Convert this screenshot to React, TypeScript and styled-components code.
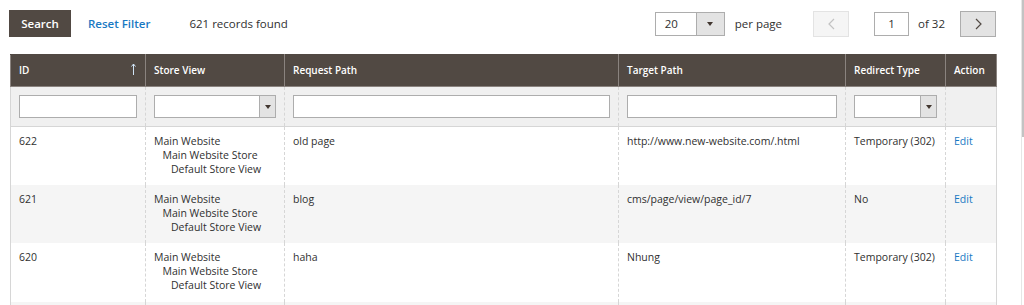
import React from "react";
import styled, { createGlobalStyle } from "styled-components";

const GlobalStyle = createGlobalStyle`
  html, body { margin: 0; padding: 0; background: #fff; }
  body { font-family: "Open Sans", "Liberation Sans", sans-serif; color: #303030; overflow: hidden; }
  * { box-sizing: border-box; }
`;

const Page = styled.div`
  display: flex;
  width: 1024px;
  height: 305px;
  overflow: hidden;
`;

const Main = styled.div`
  flex: 1;
  padding: 10px 0 0 10px;
`;

const ScrollTrack = styled.div`
  width: 3px;
  height: 305px;
  border-left: 1px solid #e6e6e6;
  display: flex;
  flex-direction: column;
`;

const ScrollThumb = styled.div`
  height: 137px;
  background: #c3c3c3;
`;

const Toolbar = styled.div`
  display: flex;
  align-items: center;
  width: 986px;
  height: 27px;
  margin-bottom: 17px;
`;

const Left = styled.div`
  display: flex;
  align-items: center;
  margin-left: -1px;
`;

const SearchButton = styled.button`
  height: 27px;
  width: 62px;
  background: #514943;
  border: 1px solid #514943;
  color: #fff;
  font-family: inherit;
  font-size: 11.5px;
  font-weight: 600;
  padding: 0;
`;

const LinkButton = styled.a`
  color: #1979c3;
  font-size: 11.5px;
  font-weight: 600;
  margin-left: 17px;
  text-decoration: none;
`;

const Count = styled.span`
  font-size: 11.5px;
  margin-left: 39px;
  color: #303030;
`;

const Pager = styled.div`
  margin-left: auto;
  display: flex;
  align-items: center;
`;

const PerPageSelect = styled.div`
  display: flex;
  width: 70px;
  height: 24px;
  border: 1px solid #adadad;
  background: #fff;
`;

const SelectValue = styled.span`
  flex: 1;
  font-size: 11.5px;
  padding-left: 9px;
  line-height: 22px;
`;

const SelectButton = styled.span<{ $w: number }>`
  width: ${(p) => p.$w}px;
  border-left: 1px solid #adadad;
  background: #e3e3e3;
  display: flex;
  align-items: center;
  justify-content: center;
`;

const Caret = styled.span`
  width: 0;
  height: 0;
  border-left: 3px solid transparent;
  border-right: 3px solid transparent;
  border-top: 4px solid #41362f;
`;

const Label = styled.span<{ $ml: number }>`
  font-size: 11.5px;
  margin-left: ${(p) => p.$ml}px;
  color: #303030;
`;

const PageButton = styled.button<{ $disabled?: boolean }>`
  width: 36px;
  height: 26px;
  padding: 0;
  display: flex;
  align-items: center;
  justify-content: center;
  background: ${(p) => (p.$disabled ? "#f5f5f5" : "#e3e3e3")};
  border: 1px solid ${(p) => (p.$disabled ? "#e3e3e3" : "#adadad")};
  color: ${(p) => (p.$disabled ? "#c2c2c2" : "#514943")};
`;

const PageInput = styled.div`
  width: 35px;
  height: 24px;
  margin-left: 25px;
  border: 1px solid #adadad;
  font-size: 11.5px;
  text-align: center;
  line-height: 22px;
`;

const Table = styled.table`
  width: 986px;
  border-collapse: collapse;
  table-layout: fixed;
  font-size: 10.5px;
`;

const HeadCell = styled.th`
  background: #514943;
  color: #fff;
  border: 1px solid #8a837f;
  border-top-color: #514943;
  height: 32px;
  padding: 0 8px 1px;
  text-align: left;
  font-weight: 600;
  font-size: 10px;
  position: relative;
`;

const SortArrow = styled.svg`
  position: absolute;
  right: 9px;
  top: 8px;
`;

const FilterCell = styled.td`
  background: #f0f0f0;
  height: 40px;
  padding: 0 8px;
  border-left: 1px dashed #d6d6d6;
  border-right: 1px dashed #d6d6d6;
  border-bottom: 1px solid #d6d6d6;
  &:first-child { border-left: 1px solid #d6d6d6; }
  &:last-child { border-right: 1px solid #d6d6d6; }
`;

const TextInput = styled.div`
  height: 23px;
  background: #fff;
  border: 1px solid #adadad;
`;

const FilterSelect = styled.div`
  height: 23px;
  display: flex;
  background: #fff;
  border: 1px solid #adadad;
`;

const Grow = styled.span`
  flex: 1;
`;

const BodyRow = styled.tr<{ $striped: boolean }>`
  background: ${(p) => (p.$striped ? "#f5f5f5" : "#fff")};
`;

const BodyCell = styled.td`
  height: 58.4px;
  padding: 7px 8px 0;
  vertical-align: top;
  line-height: 14px;
  color: #303030;
  border-left: 1px dashed #d6d6d6;
  border-right: 1px dashed #d6d6d6;
  &:first-child { border-left: 1px solid #d6d6d6; }
  &:last-child { border-right: 1px solid #d6d6d6; }
`;

const StoreLine = styled.div<{ $level: number }>`
  padding-left: ${(p) => p.$level * 8.5}px;
  white-space: nowrap;
`;

const EditLink = styled.a`
  color: #1979c3;
  text-decoration: none;
`;

const Chevron = ({ dir }: { dir: "left" | "right" }) => (
  <svg width="7" height="12" viewBox="0 0 7 12">
    <polyline
      points={dir === "left" ? "6,1 1,6 6,11" : "1,1 6,6 1,11"}
      fill="none"
      stroke="currentColor"
      strokeWidth="1.2"
    />
  </svg>
);

const rows = [
  { id: "622", req: "old page", target: "http://www.new-website.com/.html", type: "Temporary (302)" },
  { id: "621", req: "blog", target: "cms/page/view/page_id/7", type: "No" },
  { id: "620", req: "haha", target: "Nhung", type: "Temporary (302)" },
  { id: "", req: "", target: "", type: "" },
];

const widths = [135, 139, 334, 227, 100, 51];

export default function App() {
  return (
    <Page>
      <GlobalStyle />
      <Main>
        <Toolbar>
          <Left>
            <SearchButton>Search</SearchButton>
            <LinkButton>Reset Filter</LinkButton>
            <Count>621 records found</Count>
          </Left>
          <Pager>
            <PerPageSelect>
              <SelectValue>20</SelectValue>
              <SelectButton $w={28}>
                <Caret />
              </SelectButton>
            </PerPageSelect>
            <Label $ml={10}>per page</Label>
            <PageButton $disabled style={{ marginLeft: 31 }}>
              <Chevron dir="left" />
            </PageButton>
            <PageInput>1</PageInput>
            <Label $ml={9}>of 32</Label>
            <PageButton style={{ marginLeft: 15 }}>
              <Chevron dir="right" />
            </PageButton>
          </Pager>
        </Toolbar>
        <Table>
          <colgroup>
            {widths.map((w, i) => (
              <col key={i} style={{ width: w }} />
            ))}
          </colgroup>
          <thead>
            <tr>
              <HeadCell>
                ID
                <SortArrow width="5" height="12" viewBox="0 0 5 12">
                  <line x1="2.5" y1="1" x2="2.5" y2="12" stroke="#cfe3f6" strokeWidth="1" />
                  <polyline points="0.5,3.5 2.5,1 4.5,3.5" fill="none" stroke="#cfe3f6" strokeWidth="1" />
                </SortArrow>
              </HeadCell>
              <HeadCell>Store View</HeadCell>
              <HeadCell>Request Path</HeadCell>
              <HeadCell>Target Path</HeadCell>
              <HeadCell>Redirect Type</HeadCell>
              <HeadCell>Action</HeadCell>
            </tr>
            <tr>
              <FilterCell>
                <TextInput />
              </FilterCell>
              <FilterCell>
                <FilterSelect>
                  <Grow />
                  <SelectButton $w={16}>
                    <Caret />
                  </SelectButton>
                </FilterSelect>
              </FilterCell>
              <FilterCell>
                <TextInput />
              </FilterCell>
              <FilterCell>
                <TextInput />
              </FilterCell>
              <FilterCell>
                <FilterSelect>
                  <Grow />
                  <SelectButton $w={16}>
                    <Caret />
                  </SelectButton>
                </FilterSelect>
              </FilterCell>
              <FilterCell />
            </tr>
          </thead>
          <tbody>
            {rows.map((r, i) => (
              <BodyRow key={i} $striped={i % 2 === 1}>
                <BodyCell>{r.id}</BodyCell>
                <BodyCell>
                  {r.id && (
                    <>
                      <StoreLine $level={0}>Main Website</StoreLine>
                      <StoreLine $level={1}>Main Website Store</StoreLine>
                      <StoreLine $level={2}>Default Store View</StoreLine>
                    </>
                  )}
                </BodyCell>
                <BodyCell>{r.req}</BodyCell>
                <BodyCell>{r.target}</BodyCell>
                <BodyCell>{r.type}</BodyCell>
                <BodyCell>{r.id && <EditLink>Edit</EditLink>}</BodyCell>
              </BodyRow>
            ))}
          </tbody>
        </Table>
      </Main>
      <ScrollTrack>
        <ScrollThumb />
      </ScrollTrack>
    </Page>
  );
}
